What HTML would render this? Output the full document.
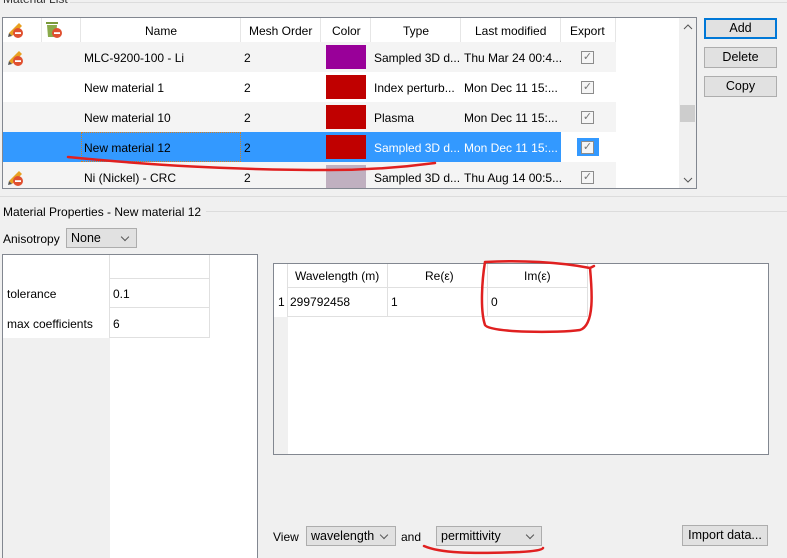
<!DOCTYPE html><html><head><style>
*{box-sizing:border-box;margin:0;padding:0}
html{overflow:hidden;height:558px}
body{width:787px;height:558px;background:#f0f0f0;font-family:"Liberation Sans",sans-serif;font-size:12px;color:#000;position:relative;overflow:hidden}
.a{position:absolute}
.t{position:absolute;white-space:nowrap;line-height:14px}
.btn{position:absolute;background:#e1e1e1;border:1px solid #adadad;text-align:center;line-height:18px;font-size:12.5px}
.cb{position:absolute;width:13px;height:13px;border:1px solid #8c8c8c;background:#f5f5f5;color:#777;font-size:11px;line-height:11px;text-align:center}
.combo{position:absolute;background:#e1e1e1;border:1px solid #adadad;height:20px;line-height:18px;padding-left:4px;font-size:12.5px}
.combo:after{content:"";position:absolute;right:8px;top:5px;width:5px;height:5px;border-right:1px solid #555;border-bottom:1px solid #555;transform:rotate(45deg)}
</style></head><body>
<div class="t" style="left:3px;top:-8px;color:#333">Material List</div>
<div class="a" style="left:70px;top:2px;width:717px;height:1px;background:#dcdcdc"></div>
<div class="a" style="left:2px;top:17px;width:695px;height:172px;border:1px solid #828790;background:#fff"></div>
<div class="a" style="left:3px;top:18px;width:676px;height:24px;background:#fff"></div>
<div class="a" style="left:3px;top:42px;width:613px;height:30px;background:#f4f4f4"></div>
<div class="a" style="left:3px;top:102px;width:613px;height:30px;background:#f4f4f4"></div>
<div class="a" style="left:3px;top:162px;width:613px;height:26px;background:#f4f4f4"></div>
<div class="a" style="left:3px;top:132px;width:558px;height:30px;background:#3399ff"></div>
<div class="a" style="left:577px;top:138px;width:22px;height:18px;background:#3399ff"></div>
<div class="a" style="left:81px;top:132px;width:160px;height:30px;border:1px dotted #d08020"></div>
<div class="a" style="left:41px;top:18px;width:1px;height:24px;background:#e6e6e6"></div>
<div class="a" style="left:80px;top:18px;width:1px;height:24px;background:#e6e6e6"></div>
<div class="a" style="left:240px;top:18px;width:1px;height:24px;background:#e6e6e6"></div>
<div class="a" style="left:320px;top:18px;width:1px;height:24px;background:#e6e6e6"></div>
<div class="a" style="left:370px;top:18px;width:1px;height:24px;background:#e6e6e6"></div>
<div class="a" style="left:460px;top:18px;width:1px;height:24px;background:#e6e6e6"></div>
<div class="a" style="left:560px;top:18px;width:1px;height:24px;background:#e6e6e6"></div>
<div class="a" style="left:615px;top:18px;width:1px;height:24px;background:#e6e6e6"></div>
<div class="t" style="left:145px;top:24px">Name</div>
<div class="t" style="left:249px;top:24px">Mesh Order</div>
<div class="t" style="left:332px;top:24px">Color</div>
<div class="t" style="left:403px;top:24px">Type</div>
<div class="t" style="left:475px;top:24px">Last modified</div>
<div class="t" style="left:570px;top:24px">Export</div>
<svg class="a" style="left:7px;top:21px" width="18" height="18"><path d="M2 12 L12 2 L15 5 L5 15 Z" fill="#e8a020"/><path d="M2 12 L1 16 L5 15 Z" fill="#555"/><circle cx="11" cy="12" r="5" fill="#e05030"/><rect x="8" y="11.2" width="6" height="1.8" fill="#fff"/></svg>
<svg class="a" style="left:45px;top:20px" width="18" height="20"><rect x="1" y="2" width="12" height="2" fill="#7a9a3a"/><path d="M2 5 H12 L11 17 H3 Z" fill="#8aaa4a"/><circle cx="12" cy="13" r="5" fill="#e05030"/><rect x="9" y="12.2" width="6" height="1.8" fill="#fff"/></svg>
<svg class="a" style="left:7px;top:49px" width="18" height="18"><path d="M2 12 L12 2 L15 5 L5 15 Z" fill="#e8a020"/><path d="M2 12 L1 16 L5 15 Z" fill="#555"/><circle cx="11" cy="12" r="5" fill="#e05030"/><rect x="8" y="11.2" width="6" height="1.8" fill="#fff"/></svg>
<svg class="a" style="left:7px;top:169px" width="18" height="18"><path d="M2 12 L12 2 L15 5 L5 15 Z" fill="#e8a020"/><path d="M2 12 L1 16 L5 15 Z" fill="#555"/><circle cx="11" cy="12" r="5" fill="#e05030"/><rect x="8" y="11.2" width="6" height="1.8" fill="#fff"/></svg>
<div class="t" style="left:84px;top:51px">MLC-9200-100 - Li</div><div class="t" style="left:244px;top:51px">2</div>
<div class="a" style="left:326px;top:45px;width:40px;height:24px;background:#990099"></div>
<div class="t" style="left:374px;top:51px">Sampled 3D d...</div><div class="t" style="left:464px;top:51px">Thu Mar 24 00:4...</div>
<div class="t" style="left:84px;top:81px">New material 1</div><div class="t" style="left:244px;top:81px">2</div>
<div class="a" style="left:326px;top:75px;width:40px;height:24px;background:#c00000"></div>
<div class="t" style="left:374px;top:81px">Index perturb...</div><div class="t" style="left:464px;top:81px">Mon Dec 11 15:...</div>
<div class="t" style="left:84px;top:111px">New material 10</div><div class="t" style="left:244px;top:111px">2</div>
<div class="a" style="left:326px;top:105px;width:40px;height:24px;background:#c00000"></div>
<div class="t" style="left:374px;top:111px">Plasma</div><div class="t" style="left:464px;top:111px">Mon Dec 11 15:...</div>
<div class="t" style="left:84px;top:141px">New material 12</div><div class="t" style="left:244px;top:141px">2</div>
<div class="a" style="left:326px;top:135px;width:40px;height:24px;background:#c00000"></div>
<div class="t" style="left:374px;top:141px;color:#fff">Sampled 3D d...</div><div class="t" style="left:464px;top:141px;color:#fff">Mon Dec 11 15:...</div>
<div class="t" style="left:84px;top:171px">Ni (Nickel) - CRC</div><div class="t" style="left:244px;top:171px">2</div>
<div class="a" style="left:326px;top:165px;width:40px;height:23px;background:#c0b0c0"></div>
<div class="t" style="left:374px;top:171px">Sampled 3D d...</div><div class="t" style="left:464px;top:171px">Thu Aug 14 00:5...</div>
<div class="cb" style="left:581px;top:51px">✓</div><div class="cb" style="left:581px;top:81px">✓</div><div class="cb" style="left:581px;top:111px">✓</div><div class="cb" style="left:581px;top:141px">✓</div><div class="cb" style="left:581px;top:171px">✓</div>
<div class="a" style="left:679px;top:18px;width:17px;height:170px;background:#f0f0f0"></div>
<div class="a" style="left:680px;top:105px;width:15px;height:17px;background:#cdcdcd"></div>
<svg class="a" style="left:683px;top:24px" width="10" height="6"><path d="M1 5 L5 1 L9 5" fill="none" stroke="#555"/></svg>
<svg class="a" style="left:683px;top:177px" width="10" height="6"><path d="M1 1 L5 5 L9 1" fill="none" stroke="#555"/></svg>
<div class="btn" style="left:704px;top:18px;width:73px;height:21px;border:2px solid #0078d7;line-height:17px">Add</div>
<div class="btn" style="left:704px;top:47px;width:73px;height:21px">Delete</div>
<div class="btn" style="left:704px;top:76px;width:73px;height:21px">Copy</div>
<div class="a" style="left:0;top:196px;width:787px;height:1px;background:#dcdcdc"></div>
<div class="t" style="left:3px;top:205px">Material Properties - New material 12</div>
<div class="a" style="left:206px;top:211px;width:581px;height:1px;background:#dcdcdc"></div>
<div class="t" style="left:3px;top:232px">Anisotropy</div>
<div class="combo" style="left:66px;top:228px;width:71px">None</div>
<div class="a" style="left:2px;top:254px;width:256px;height:304px;border:1px solid #828790;border-bottom:none;background:#fff"></div>
<div class="a" style="left:3px;top:338px;width:107px;height:220px;background:#f0f0f0"></div>
<div class="a" style="left:109px;top:255px;width:1px;height:83px;background:#e0e0e0"></div>
<div class="a" style="left:209px;top:255px;width:1px;height:83px;background:#e0e0e0"></div>
<div class="a" style="left:110px;top:278px;width:100px;height:1px;background:#e0e0e0"></div>
<div class="a" style="left:110px;top:307px;width:100px;height:1px;background:#e0e0e0"></div>
<div class="a" style="left:110px;top:337px;width:100px;height:1px;background:#e0e0e0"></div>
<div class="t" style="left:7px;top:287px">tolerance</div><div class="t" style="left:113px;top:287px">0.1</div>
<div class="t" style="left:7px;top:317px">max coefficients</div><div class="t" style="left:113px;top:317px">6</div>
<div class="a" style="left:273px;top:263px;width:496px;height:192px;border:1px solid #828790;background:#fff"></div>
<div class="a" style="left:274px;top:317px;width:14px;height:137px;background:#f0f0f0"></div>
<div class="a" style="left:287px;top:287px;width:301px;height:1px;background:#e0e0e0"></div>
<div class="a" style="left:287px;top:316px;width:301px;height:1px;background:#e0e0e0"></div>
<div class="a" style="left:287px;top:264px;width:1px;height:53px;background:#e0e0e0"></div>
<div class="a" style="left:387px;top:264px;width:1px;height:53px;background:#e0e0e0"></div>
<div class="a" style="left:487px;top:264px;width:1px;height:53px;background:#e0e0e0"></div>
<div class="a" style="left:587px;top:264px;width:1px;height:53px;background:#e0e0e0"></div>
<div class="t" style="left:295px;top:269px">Wavelength (m)</div>
<div class="t" style="left:425px;top:269px">Re(ε)</div>
<div class="t" style="left:524px;top:269px">Im(ε)</div>
<div class="t" style="left:278px;top:295px">1</div>
<div class="t" style="left:290px;top:295px">299792458</div>
<div class="t" style="left:391px;top:295px">1</div>
<div class="t" style="left:491px;top:295px">0</div>
<div class="t" style="left:273px;top:530px">View</div>
<div class="combo" style="left:306px;top:526px;width:90px">wavelength</div>
<div class="t" style="left:401px;top:530px">and</div>
<div class="combo" style="left:436px;top:526px;width:106px">permittivity</div>
<div class="btn" style="left:682px;top:525px;width:86px;height:21px">Import data...</div>
<svg class="a" style="left:0;top:0" width="787" height="558"><g fill="none" stroke="#e02020" stroke-width="2.5" stroke-linecap="round">
<path d="M68 157 C150 165 230 170 330 170 C380 170 420 165 435 163"/>
<path d="M485 262 C482 280 480 310 485 325 C490 333 560 333 580 330 C595 325 592 290 590 268 C560 262 520 260 485 262 M590 268 L594 266"/>
<path d="M424 546 C440 553 470 554 520 552 C535 551 542 550 543 548"/>
</g></svg>
</body></html>
